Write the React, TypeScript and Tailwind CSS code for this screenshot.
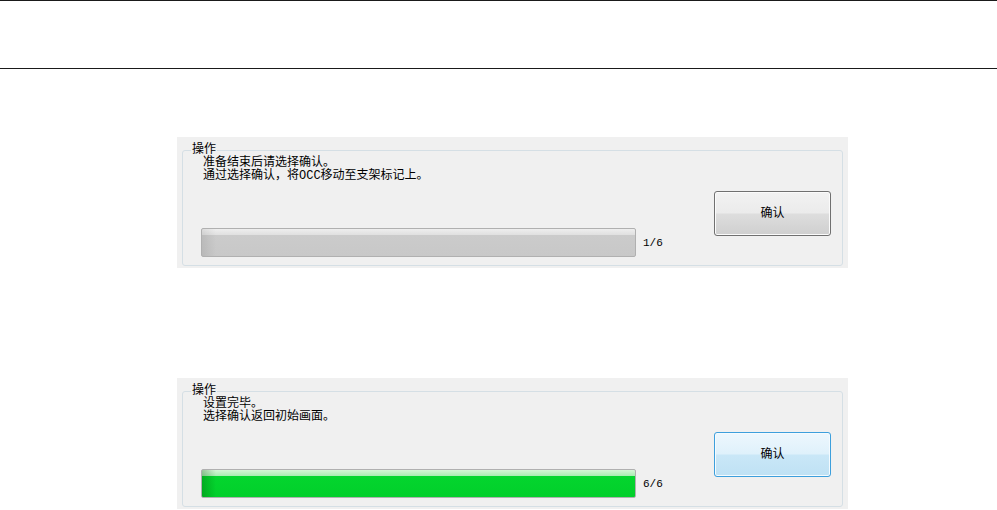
import * as React from 'react';

type PanelProps = {
  lines: string[];
  progress: string;
  done: boolean;
};

function StepPanel({ lines, progress, done }: PanelProps) {
  const barFill = done
    ? "bg-[linear-gradient(to_right,rgba(0,70,0,0.28)_0px,rgba(0,70,0,0)_14px),linear-gradient(to_bottom,#d4f7d6_0%,#a9ecb2_22%,#04d52e_24%,#02cf2b_100%)]"
    : "bg-[linear-gradient(to_right,rgba(0,0,0,0.08)_0px,rgba(0,0,0,0)_14px),linear-gradient(to_bottom,#eeeeee_0%,#e0e0e0_22%,#cbcbcb_24%,#c8c8c8_100%)]";

  const buttonStyle = done
    ? "border-[#3d9fdc] bg-[linear-gradient(to_bottom,#edf7fd_0%,#dff1fb_48%,#c9e7f7_52%,#bfe1f4_100%)] shadow-[inset_0_0_0_1px_#f4fbff]"
    : "border-[#707070] bg-[linear-gradient(to_bottom,#f2f2f2_0%,#ebebeb_48%,#dddddd_52%,#cfcfcf_100%)] shadow-[inset_0_0_0_1px_#fbfbfb]";

  return (
    <div className="ml-[177px] w-[671px] h-[131px] bg-[#f0f0f0] pt-[6px] px-[5px] pb-[2px]">
      <fieldset className="h-[123px] border border-[#d5dfe5] rounded-[3px] p-0 m-0 min-w-0">
        <legend className="ml-[8px] px-[1px] text-[12px] leading-[14px] text-black">操作</legend>
        <div className="flex flex-col pl-[18px] pr-[11px]">
          <div className="ml-[2px] text-[12px] leading-[13px] text-black">
            {lines.map((l, i) => (
              <div key={i}>{l}</div>
            ))}
          </div>
          <div className="flex items-start justify-between">
            <div className="mt-[45px] flex items-center gap-[7px]">
              <div className={`w-[435px] h-[29px] border border-[#b0b0b0] rounded-[2px] ${barFill}`} />
              <span className="text-[11px] leading-[14px] font-['Liberation_Mono',monospace] text-black">
                {progress}
              </span>
            </div>
            <button
              type="button"
              className={`mt-[8px] w-[117px] h-[45px] border rounded-[3px] text-[12px] text-black ${buttonStyle}`}
            >
              确认
            </button>
          </div>
        </div>
      </fieldset>
    </div>
  );
}

export default function App() {
  return (
    <div className="w-[997px] h-[510px] overflow-hidden bg-white font-['Liberation_Mono','Noto_Sans_CJK_SC',monospace]">
      <div className="h-[69px] border-t border-b border-[#1a1a1a]" />
      <div className="mt-[68px]">
        <StepPanel
          lines={["准备结束后请选择确认。", "通过选择确认，将OCC移动至支架标记上。"]}
          progress="1/6"
          done={false}
        />
      </div>
      <div className="mt-[110px]">
        <StepPanel
          lines={["设置完毕。", "选择确认返回初始画面。"]}
          progress="6/6"
          done={true}
        />
      </div>
    </div>
  );
}
